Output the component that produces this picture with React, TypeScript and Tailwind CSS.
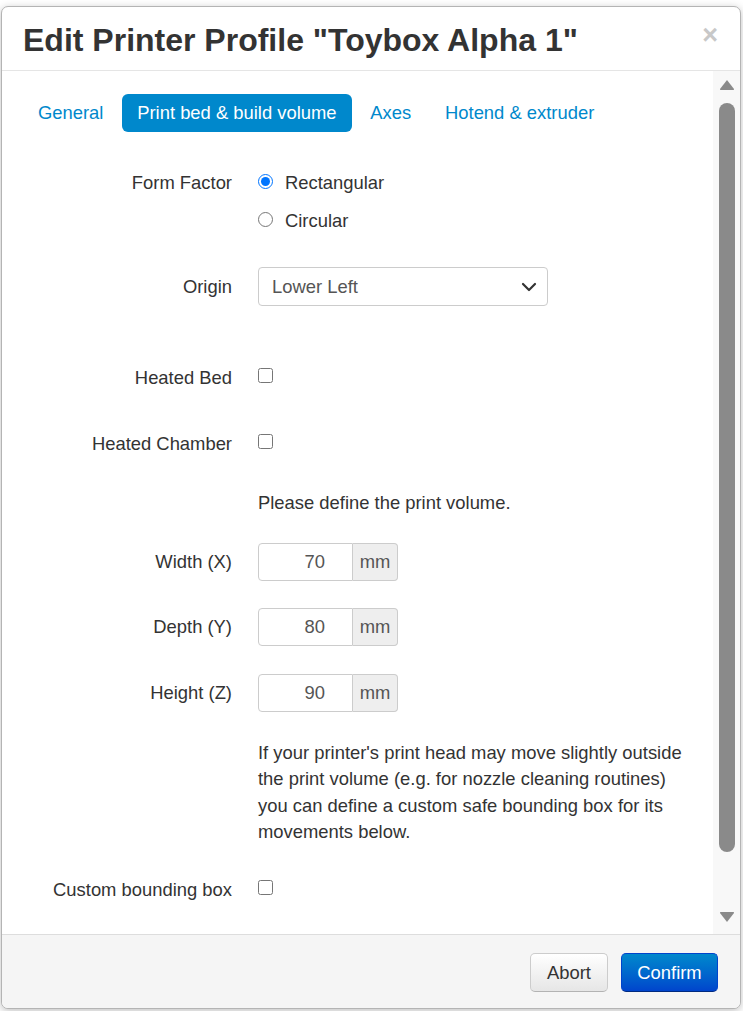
import React from "react";
import { ChevronDown } from "lucide-react";

const font = "font-['Liberation_Sans',Arial,sans-serif]";

function Label({ children }: { children: React.ReactNode }) {
  return (
    <div className="w-[208px] shrink-0 text-right leading-[26px] text-[18.4px] text-[#333]">
      {children}
    </div>
  );
}

function UnitInput({ value }: { value: string }) {
  return (
    <div className="flex h-[38px]">
      <div className="w-[95px] h-full border border-[#ccc] rounded-l-[4px] bg-white text-right pr-[27px] leading-[36px] text-[18.4px] text-[#555]">
        {value}
      </div>
      <div className="w-[45px] h-full border border-l-0 border-[#ccc] rounded-r-[4px] bg-[#eee] text-center leading-[36px] text-[18.4px] text-[#555]">
        mm
      </div>
    </div>
  );
}

function Check() {
  return (
    <input
      type="checkbox"
      readOnly
      className="m-0 w-[15px] h-[15px] mt-[3px]"
    />
  );
}

export default function App() {
  return (
    <div className={`${font} w-[743px] h-[1011px] bg-white overflow-hidden text-[#333]`}>
      <div className="ml-[1px] mt-[6px] w-[740px] h-[1003px] border border-[#b4b4b4] rounded-[7px] bg-white flex flex-col overflow-hidden shadow-[0_2px_8px_rgba(0,0,0,0.25)]">
        {/* header */}
        <div className="h-[64px] shrink-0 border-b border-[#e5e5e5] flex items-center justify-between pl-[21px] pr-[22px] pt-[3px]">
          <h3 className="text-[32px] font-bold leading-none text-[#333]">
            Edit Printer Profile "Toybox Alpha 1"
          </h3>
          <span className="text-[27px] font-bold leading-none text-[#c8c8c8] -mt-[10px]">×</span>
        </div>

        {/* body */}
        <div className="h-[863px] shrink-0 flex">
          <div className="flex-1 overflow-hidden pl-[22px] flex flex-col">
            {/* tabs */}
            <div className="mt-[23px] h-[38px] flex items-center text-[18.4px]">
              <div className="pl-[14px] pr-[15.6px] h-full leading-[38px] text-[#0088cc] mr-[2.6px]">General</div>
              <div className="px-[15.6px] h-full leading-[38px] bg-[#0088cc] text-white rounded-[6px] mr-[2.6px]">
                Print bed &amp; build volume
              </div>
              <div className="px-[15.6px] h-full leading-[38px] text-[#0088cc] mr-[2.6px]">Axes</div>
              <div className="px-[15.6px] h-full leading-[38px] text-[#0088cc]">Hotend &amp; extruder</div>
            </div>

            {/* Form factor */}
            <div className="mt-[38px] flex">
              <Label>Form Factor</Label>
              <div className="ml-[26px] flex flex-col gap-[12px] text-[18.4px]">
                <div className="h-[26px] flex items-center gap-[12px]">
                  <input type="radio" name="ff" checked readOnly className="m-0 w-[15px] h-[15px] -mt-[4px]" />
                  <span>Rectangular</span>
                </div>
                <div className="h-[26px] flex items-center gap-[12px]">
                  <input type="radio" name="ff" readOnly className="m-0 w-[15px] h-[15px] -mt-[4px]" />
                  <span>Circular</span>
                </div>
              </div>
            </div>

            {/* Origin */}
            <div className="mt-[33px] h-[39px] flex items-center">
              <Label>Origin</Label>
              <div className="ml-[26px] w-[290px] h-[39px] border border-[#ccc] rounded-[4px] flex items-center justify-between pl-[13px] pr-[6px] text-[18.4px] text-[#555]">
                <span>Lower Left</span>
                <ChevronDown size={24} strokeWidth={2.2} color="#333" />
              </div>
            </div>

            {/* Heated bed */}
            <div className="mt-[59px] h-[26px] flex items-start">
              <Label>Heated Bed</Label>
              <div className="ml-[26px] flex">
                <Check />
              </div>
            </div>

            {/* Heated chamber */}
            <div className="mt-[40px] h-[26px] flex items-start">
              <Label>Heated Chamber</Label>
              <div className="ml-[26px] flex">
                <Check />
              </div>
            </div>

            <div className="mt-[33px] ml-[234px] leading-[26px] text-[18.4px]">
              Please define the print volume.
            </div>

            <div className="mt-[27px] flex items-center">
              <Label>Width (X)</Label>
              <div className="ml-[26px]">
                <UnitInput value="70" />
              </div>
            </div>
            <div className="mt-[27px] flex items-center">
              <Label>Depth (Y)</Label>
              <div className="ml-[26px]">
                <UnitInput value="80" />
              </div>
            </div>
            <div className="mt-[28px] flex items-center">
              <Label>Height (Z)</Label>
              <div className="ml-[26px]">
                <UnitInput value="90" />
              </div>
            </div>

            <p className="mt-[28px] ml-[234px] w-[432px] leading-[26.4px] text-[18.4px]">
              If your printer's print head may move slightly outside the print volume (e.g. for nozzle cleaning routines) you can define a custom safe bounding box for its movements below.
            </p>

            <div className="mt-[31px] h-[26px] flex items-start">
              <Label>Custom bounding box</Label>
              <div className="ml-[26px] flex">
                <Check />
              </div>
            </div>
          </div>

          {/* scrollbar */}
          <div className="w-[27px] shrink-0 bg-[#f8f8f8] flex flex-col items-center pt-[8px]">
            <svg width="16" height="11" viewBox="0 0 16 11">
              <path d="M8 1 L15 10 Q15.5 11 14 11 L2 11 Q0.5 11 1 10 Z" fill="#8a8a8a" />
            </svg>
            <div className="mt-[13px] w-[16px] h-[749px] rounded-full bg-[#8a8a8a]" />
            <svg width="16" height="11" viewBox="0 0 16 11" className="mt-[60px]">
              <path d="M8 10 L15 1 Q15.5 0 14 0 L2 0 Q0.5 0 1 1 Z" fill="#8a8a8a" />
            </svg>
          </div>
        </div>

        {/* footer */}
        <div className="flex-1 border-t border-[#ddd] bg-[#f5f5f5] flex justify-end items-start pt-[18px] pr-[22px] gap-[13px]">
          <div className="w-[78px] h-[39px] rounded-[5px] border border-[#ccc] border-b-[#b3b3b3] bg-gradient-to-b from-white to-[#e6e6e6] flex items-center justify-center text-[18.4px] text-[#333]">
            Abort
          </div>
          <div className="w-[97px] h-[39px] rounded-[5px] border border-[#0044cc] border-b-[#002a80] bg-gradient-to-b from-[#0088cc] to-[#0044cc] flex items-center justify-center text-[18.4px] text-white">
            Confirm
          </div>
        </div>
      </div>
    </div>
  );
}
